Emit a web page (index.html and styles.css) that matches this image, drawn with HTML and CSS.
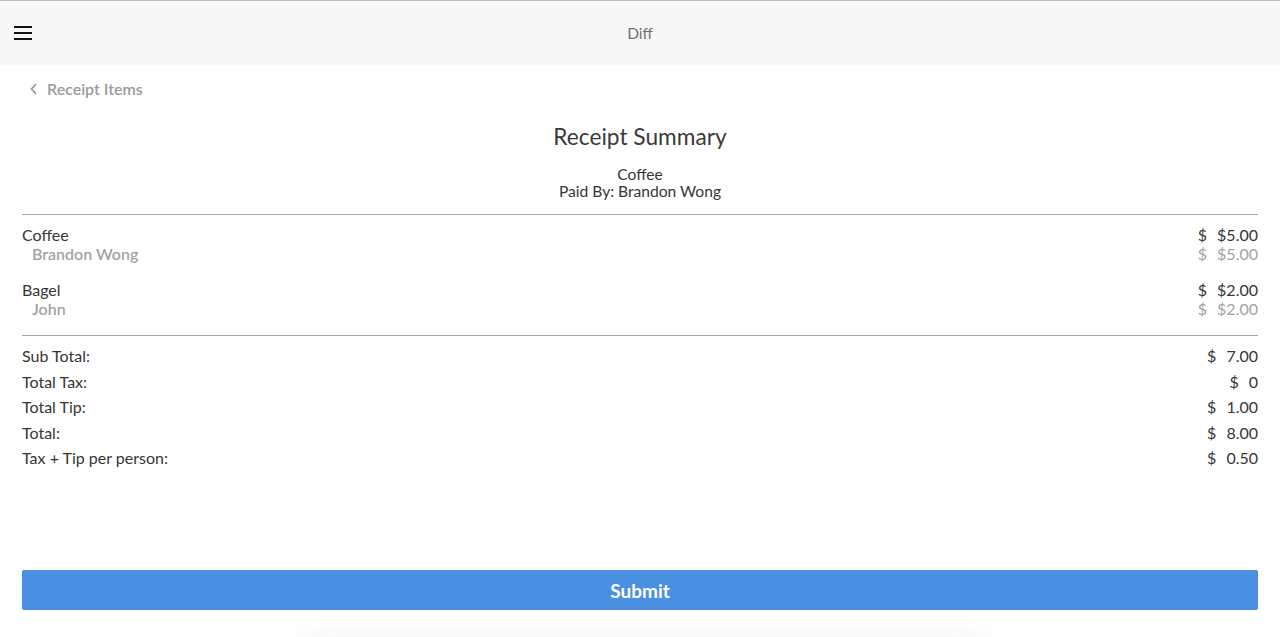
FILE: index.html
```html
<!DOCTYPE html>
<html>
<head>
<meta charset="utf-8">
<link rel="stylesheet" href="styles.css">
</head>
<body>
<div class="app">
  <header class="topbar">
    <button class="menu" aria-label="menu">
      <svg width="18" height="14" viewBox="0 0 18 14"><rect x="0" y="0" width="18" height="2" fill="#111"/><rect x="0" y="6" width="18" height="2" fill="#111"/><rect x="0" y="12" width="18" height="2" fill="#111"/></svg>
    </button>
    <div class="title">Diff</div>
  </header>
  <main class="content">
    <a class="back">
      <svg width="8" height="12" viewBox="0 0 8 12"><polyline points="6,1 1.5,6 6,11" fill="none" stroke="#9b9b9b" stroke-width="1.8"/></svg>
      <span>Receipt Items</span>
    </a>
    <h1 class="heading">Receipt Summary</h1>
    <div class="sub">
      <div>Coffee</div>
      <div>Paid By: Brandon Wong</div>
    </div>
    <hr class="rule">
    <div class="items">
      <div class="item">
        <div class="row"><span>Coffee</span><span class="amt"><span>$</span><span>$5.00</span></span></div>
        <div class="row person"><span>Brandon Wong</span><span class="amt"><span>$</span><span>$5.00</span></span></div>
      </div>
      <div class="item">
        <div class="row"><span>Bagel</span><span class="amt"><span>$</span><span>$2.00</span></span></div>
        <div class="row person"><span>John</span><span class="amt"><span>$</span><span>$2.00</span></span></div>
      </div>
    </div>
    <hr class="rule">
    <div class="totals">
      <div class="row"><span>Sub Total:</span><span class="amt"><span>$</span><span>7.00</span></span></div>
      <div class="row"><span>Total Tax:</span><span class="amt"><span>$</span><span>0</span></span></div>
      <div class="row"><span>Total Tip:</span><span class="amt"><span>$</span><span>1.00</span></span></div>
      <div class="row"><span>Total:</span><span class="amt"><span>$</span><span>8.00</span></span></div>
      <div class="row"><span>Tax + Tip per person:</span><span class="amt"><span>$</span><span>0.50</span></span></div>
    </div>
    <button class="submit">Submit</button>
  </main>
  <div class="floating-shadow"></div>
</div>
</body>
</html>
```

FILE: styles.css
```css
* { box-sizing: border-box; }
html, body { margin: 0; padding: 0; height: 100%; overflow: hidden; }
body {
  font-family: Lato, "Open Sans", sans-serif;
  color: #363636;
  background: #fff;
}
.app {
  position: relative;
  display: flex;
  flex-direction: column;
  height: 637px;
  overflow: hidden;
}
.topbar {
  border-top: 1px solid #bdbdbd;
  height: 65px;
  background: #f7f7f7;
  display: flex;
  align-items: center;
  position: relative;
  flex: none;
}
.menu {
  border: 0;
  background: none;
  padding: 0;
  margin-left: 14px;
  margin-top: -1px;
  display: flex;
}
.title {
  position: absolute;
  left: 0; right: 0;
  text-align: center;
  font-size: 15.5px;
  color: #707070;
  pointer-events: none;
}
.content {
  flex: 1;
  display: flex;
  flex-direction: column;
  padding: 14px 22px 27px;
}
.back {
  display: flex;
  align-items: center;
  gap: 9px;
  padding-left: 8px;
  font-size: 16px;
  line-height: 20px;
  font-weight: 600;
  color: #9b9b9b;
}
.heading {
  margin: 24px 0 0;
  text-align: center;
  font-size: 22.7px;
  line-height: 28px;
  font-weight: 400;
  color: #3a3a3a;
}
.sub {
  margin-top: 15px;
  text-align: center;
  font-size: 15.6px;
  line-height: 16.5px;
}
.rule {
  margin: 15px 0 0;
  border: 0;
  border-top: 1px solid #a8a8a8;
  height: 0;
}
.items {
  padding: 10px 0 17px;
  display: flex;
  flex-direction: column;
  gap: 17px;
}
.row {
  display: flex;
  justify-content: space-between;
  font-size: 16px;
  line-height: 19px;
}
.person {
  color: #a3a3a3;
  font-weight: 600;
  padding-left: 10px;
}
.person .amt { font-weight: 400; }
.amt {
  display: flex;
  gap: 10px;
}
.totals {
  padding-top: 7px;
}
.totals .row {
  line-height: 25.5px;
}
.items + .rule { margin-top: 0; }
.submit {
  margin-top: auto;
  height: 40px;
  width: 100%;
  border: 0;
  border-radius: 2px;
  background: #4a90e2;
  color: #fff;
  font-family: Lato, sans-serif;
  font-size: 19px;
  font-weight: 700;
}
.floating-shadow {
  position: absolute;
  left: 300px;
  width: 690px;
  top: 652px;
  height: 40px;
  border-radius: 20px;
  box-shadow: 0 0 30px 8px rgba(0,0,0,0.09);
}
```
